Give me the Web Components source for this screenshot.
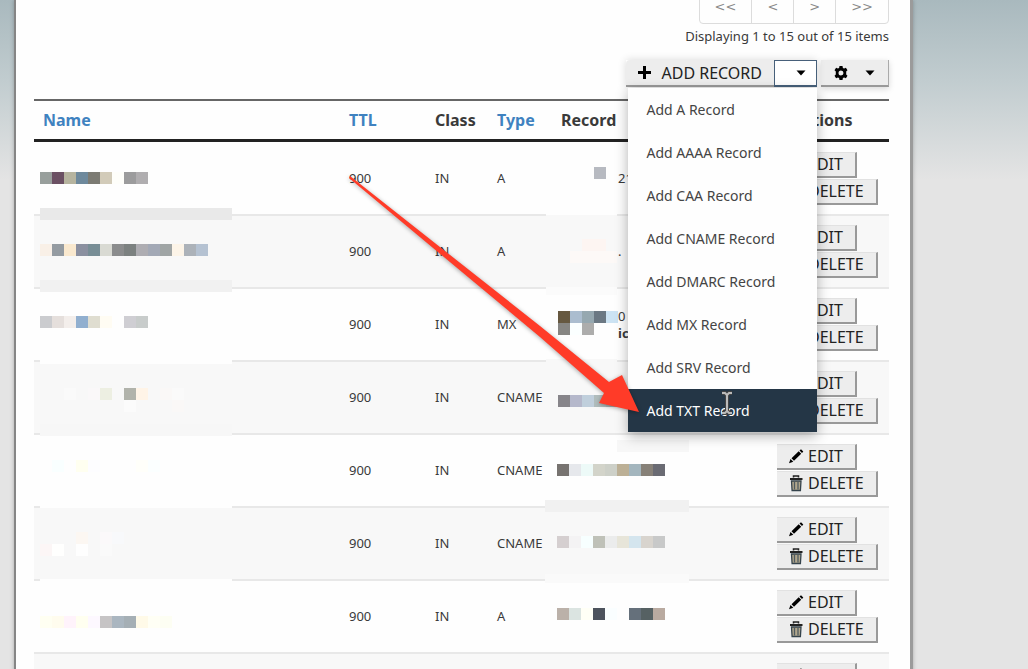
<!DOCTYPE html>
<html lang="en">
<head>
<meta charset="utf-8">
<meta name="viewport" content="width=device-width, initial-scale=1">
<title>DNS Records</title>
<style>
  html, body {
    margin: 0;
    height: 100%;
    overflow: hidden;
  }

  body {
    position: relative;
    font-family: "Noto Sans", sans-serif;
    color: #3a3a3a;
    background: #e4e4e4 linear-gradient(#a9b9be, #c1cccf 80px, #e4e4e4 180px) no-repeat;
  }
</style>
</head>
<body>
<dns-panel>
  <item-pager></item-pager>
  <record-toolbar></record-toolbar>
  <record-table></record-table>
</dns-panel>
<redaction-layer></redaction-layer>
<pointer-layer></pointer-layer>

<script>
// Small inline icons shared by the buttons
const icons = {
  plus: '<svg class="icon" width="13" height="13" viewBox="0 0 13 13"><path d="M5 0h3v5h5v3H8v5H5V8H0V5h5z"/></svg>',
  caret: '<svg class="caret" width="10" height="6" viewBox="0 0 10 6"><path d="M.5.5h9L5 5.500z"/></svg>',
  gear: '<svg class="icon" width="14" height="14" viewBox="0 0 14 14"><path fill-rule="evenodd" d="M5.500 0h3l.4 1.900 1.200.6 1.800-.8 1.600 2.500-1.300 1.400v2.800l1.300 1.400-1.600 2.500-1.800-.8-1.200.6-.4 1.900h-3l-.4-1.900-1.200-.6-1.800.8L.5 9.800l1.300-1.400V5.600L.5 4.200l1.600-2.500 1.800.8 1.200-.6zM7 4.500a2.500 2.500 0 1 0 0 5 2.500 2.500 0 0 0 0-5z"/></svg>',
  pencil: '<svg class="icon" width="16" height="15" viewBox="0 0 16 15"><path d="M11.500 1.500 13 .3l2.300 2.300-1.300 1.400zM3.500 9.300l7.200-7 2.500 2.500-7.200 7zM1 14.300l1.500-4.200 2.800 2.600z"/></svg>',
  trash: '<svg class="icon" width="16" height="17" viewBox="0 0 16 17"><path d="M5.500 2.500V1h5v1.500" fill="none" stroke="#222" stroke-width="1.500"/><path d="M2 3h12.500v2H2z" fill="#222"/><path d="M3.500 6h9.500l-.6 9.500H4.100z" fill="#b0a68c" stroke="#35434c" stroke-width="1.300"/><path d="M6.500 7v7.500M10 7v7.500" stroke="#4f5b60" stroke-width="1.300"/></svg>'
};

// Main white panel
class DnsPanel extends HTMLElement {
  constructor() {
    super();
    this.attachShadow({ mode: 'open' });
    this.shadowRoot.innerHTML = `
      <style>
        :host {
          display: flex;
          flex-direction: column;
          box-sizing: border-box;
          min-height: 100%;
          margin: 0 115px 0 14px;
          padding: 0 21px 0 18px;
          border-left: 2px solid #858585;
          border-right: 3px solid #9b9b9b;
          background: #fefefe;
          box-shadow: 0 0 4px rgba(0, 0, 0, 0.25);
        }
      </style>
      <slot></slot>
    `;
  }
}
customElements.define('dns-panel', DnsPanel);

// Page navigation with the item count below it
class ItemPager extends HTMLElement {
  constructor() {
    super();
    this.attachShadow({ mode: 'open' });
    this.shadowRoot.innerHTML = `
      <style>
        :host {
          display: flex;
          flex-direction: column;
          align-items: flex-end;
          margin-top: -11px;
        }
        nav {
          display: flex;
          border: 1px solid #dcdcdc;
          border-radius: 4px;
        }
        button {
          height: 33px;
          padding: 0 15px;
          border: 0;
          border-left: 1px solid #dcdcdc;
          background: none;
          font: 13px/33px "DejaVu Sans", sans-serif;
          color: #8a8a8a;
        }
        button:first-child {
          border-left: 0;
        }
        p {
          margin: 4px 0 0;
          font-size: 13px;
          line-height: 16px;
        }
      </style>
      <nav aria-label="Pages">
        <button type="button">&lt;&lt;</button>
        <button type="button">&lt;</button>
        <button type="button">&gt;</button>
        <button type="button">&gt;&gt;</button>
      </nav>
      <p>Displaying 1 to 15 out of 15 items</p>
    `;
  }
}
customElements.define('item-pager', ItemPager);

// Split button with its open menu, and the settings button
class RecordToolbar extends HTMLElement {
  constructor() {
    super();
    this.attachShadow({ mode: 'open' });
    const types = ['A', 'AAAA', 'CAA', 'CNAME', 'DMARC', 'MX', 'SRV', 'TXT'];
    const items = types.map(type => `
      <li><button type="button" class="${type === 'TXT' ? 'item active' : 'item'}">Add ${type} Record</button></li>
    `).join('');

    this.shadowRoot.innerHTML = `
      <style>
        :host {
          display: flex;
          justify-content: flex-end;
          gap: 4px;
          margin-top: 16px;
        }
        .split {
          position: relative;
          display: flex;
          box-shadow: 0 0 8px rgba(0, 0, 0, 0.15);
        }
        .tool {
          display: flex;
          align-items: center;
          box-sizing: border-box;
          height: 27px;
          border: 0;
          border-right: 1px solid #aaa;
          border-bottom: 2px solid #999;
          background: #ededed;
          font: 16px/24px "Noto Sans", sans-serif;
          color: #222;
        }
        .add {
          gap: 10px;
          padding: 0 12px;
          border-right: 0;
          border-radius: 4px 0 0 0;
        }
        .toggle {
          justify-content: flex-end;
          width: 43px;
          padding: 0 10px;
          border: 1px solid #47607a;
          border-bottom-width: 2px;
          background: #fff;
        }
        .settings {
          gap: 17px;
          padding: 0 13px;
          box-shadow: 0 2px 6px rgba(0, 0, 0, 0.15);
        }
        ul {
          position: absolute;
          top: 28px;
          right: 0;
          left: 2px;
          z-index: 2;
          margin: 0;
          padding: 0;
          list-style: none;
          background: #fefefe;
          box-shadow: 0 4px 12px rgba(0, 0, 0, 0.3);
        }
        .item {
          display: block;
          width: 100%;
          height: 43px;
          padding: 0 18px;
          border: 0;
          background: none;
          font: 14px/43px "Noto Sans", sans-serif;
          color: #444;
          text-align: left;
        }
        .active {
          background: #243646;
          color: #fff;
        }
      </style>
      <div class="split">
        <button type="button" class="tool add">${icons.plus}ADD RECORD</button>
        <button type="button" class="tool toggle" aria-label="Record types">${icons.caret}</button>
        <ul>${items}</ul>
      </div>
      <button type="button" class="tool settings" aria-label="Settings">${icons.gear}${icons.caret}</button>
    `;
  }
}
customElements.define('record-toolbar', RecordToolbar);

// Edit and delete buttons of one record
class RecordActions extends HTMLElement {
  constructor() {
    super();
    this.attachShadow({ mode: 'open' });
    this.shadowRoot.innerHTML = `
      <style>
        :host {
          display: flex;
          flex-direction: column;
          align-items: flex-start;
          gap: 1px;
        }
        button {
          display: flex;
          align-items: center;
          gap: 4px;
          box-sizing: border-box;
          height: 26px;
          padding: 0 12px 0 11px;
          border: 0;
          border-top: 1px solid #e2e2e2;
          border-right: 2px solid #999;
          border-bottom: 2px solid #999;
          background: #ededed;
          font: 16px/23px "Noto Sans", sans-serif;
          color: #222;
        }
      </style>
      <button type="button">${icons.pencil}EDIT</button>
      <button type="button">${icons.trash}DELETE</button>
    `;
  }
}
customElements.define('record-actions', RecordActions);

class RecordTable extends HTMLElement {
  constructor() {
    super();
    this.attachShadow({ mode: 'open' });
    const rows = [
      ['A', '21'],
      ['A', '.'],
      ['MX', '0<br><b>ic</b>'],
      ['CNAME', ''],
      ['CNAME', ''],
      ['CNAME', ''],
      ['A', ''],
      ['A', '']
    ];
    const body = rows.map(([type, record]) => `
      <tr>
        <td></td>
        <td>900</td>
        <td>IN</td>
        <td>${type}</td>
        <td class="record">${record}</td>
        <td><record-actions></record-actions></td>
      </tr>
    `).join('');

    this.shadowRoot.innerHTML = `
      <style>
        :host {
          display: block;
          margin-top: 12px;
        }
        table {
          width: 100%;
          table-layout: fixed;
          border-spacing: 0;
        }
        th, td {
          box-sizing: border-box;
          padding: 0 0 0 9px;
          text-align: left;
          white-space: nowrap;
        }
        th {
          height: 43px;
          border-top: 2px solid #666;
          border-bottom: 3px solid #222;
          font-size: 16px;
          line-height: 20px;
        }
        th:last-child {
          padding-left: 25px;
        }
        a {
          color: #3f82c0;
          text-decoration: none;
        }
        td {
          height: 73px;
          border-top: 2px solid #e8e8e8;
          font-size: 13px;
          line-height: 17px;
        }
        tbody tr:first-child td {
          height: 72px;
          border-top: 0;
        }
        tbody tr:nth-child(even) {
          background: #f8f8f8;
        }
        .record {
          padding-left: 66px;
        }
        .name { width: auto; }
        .ttl { width: 86px; }
        .class { width: 62px; }
        .type { width: 64px; }
        .value { width: 216px; }
        .actions { width: 121px; }
      </style>
      <table>
        <colgroup>
          <col class="name"><col class="ttl"><col class="class">
          <col class="type"><col class="value"><col class="actions">
        </colgroup>
        <thead>
          <tr>
            <th><a href="#name">Name</a></th>
            <th><a href="#ttl">TTL</a></th>
            <th>Class</th>
            <th><a href="#type">Type</a></th>
            <th>Record</th>
            <th>Actions</th>
          </tr>
        </thead>
        <tbody>${body}</tbody>
      </table>
    `;
  }
}
customElements.define('record-table', RecordTable);

// Pixel blocks that hide the private names and values
class RedactionLayer extends HTMLElement {
  constructor() {
    super();
    this.attachShadow({ mode: 'open' });

    // x, y, width, height, colour
    const bands = [
      [40, 208, 192, 12, '#e9e9e9'],
      [40, 280, 192, 12, '#f1f1f1'],
      [40, 352, 192, 12, '#fefefe'],
      [40, 424, 192, 12, '#f7f7f7'],
      [40, 496, 192, 12, '#fefefe'],
      [40, 579, 192, 3, '#fefefe'],
      [546, 204, 71, 11, '#fefefe'],
      [546, 215, 71, 8, '#f8f8f8'],
      [546, 287, 71, 8, '#fbfbfb'],
      [546, 359, 71, 6, '#f8f8f8'],
      [617, 440, 72, 12, '#f7f7f7'],
      [545, 500, 144, 12, '#f1f1f1'],
      [545, 574, 144, 9, '#fafafa'],
      [594, 167, 12, 12, '#b7bac1'],
      [582, 239, 24, 12, '#fdf5f2'],
      [570, 251, 47, 12, '#fdf9f7']
    ];
    // x, y, colour of each 12px block ("-" leaves one out)
    const runs = [
      [40, 172, '#989f9c #6b5063 #b6b49f #6e899c #7c7b73 #d2cbb9 #fefefa #9c9c9d #b0aeb0'],
      [40, 244, '#f9f0e7 #949ba1 #fae9cf #8b90a0 #788e96 #d9dad3 #8b8c8d #7c8180 #aeadb2 #a3a9b6 #a0a5a5 #fcf4e8 #acb2b9 #b5c2d2'],
      [40, 316, '#cbcccf #e5dfdc #f3eeeb #91afcf #dfddd0 #fffcf3 - #cfced3 #c8cccb'],
      [40, 388, '- - #fafafa - #faf8f9 #edefe2 - #b1b3ab #fff4e7 - #faf8f7 #fafafa'],
      [112, 400, '- #fbfbfb - - - #faf8f7'],
      [40, 460, '- #f9ffff - #fffff0 #fdfdff - - - #fffffa #fbffff'],
      [40, 532, '- - - #fcf7f2 - #fbf9fa #f8f9fb'],
      [40, 544, '#fcf6f6 #fffffe - #fefefe - #fafafa'],
      [40, 616, '#fffff2 #fffcee #fff3fb #fffff0 #fdf8ff #c6c4c5 #aab6c0 #a5afb5 #fffae8 #fffff5 #fdfef3'],
      [558, 311, '#665840 #abbdcf #96a8b0 #6b7883 #cce3f3'],
      [558, 323, '#878683 #fbffff #adadac'],
      [558, 395, '#87858a #b5b8cb #c0cfdc #b0bcbc #aab4b5'],
      [557, 464, '#777370 #e6e8ec #edfaf8 #d3d4ca #cdd0c8 #bcb096 #a4b6be #878178 #6a6b73'],
      [557, 536, '#d5cfd0 #f4f3f4 #f7ffff #bfc1b8 #ebecec #e7e5d9 #d4e5ee #d8d4ce #c8c9c9'],
      [557, 608, '#bbb1a9 #dbe4e1 #fffff6 #4d535d #fafeff - #65707b #566163 #b9aaa0']
    ];

    const bandRects = bands.map(([x, y, w, h, fill]) =>
      `<rect x="${x}" y="${y}" width="${w}" height="${h}" fill="${fill}"/>`);
    const blockRects = runs.flatMap(([x, y, fills]) =>
      fills.split(' ').map((fill, i) => fill === '-' ? '' :
        `<rect x="${x + i * 12}" y="${y}" width="12" height="12" fill="${fill}"/>`));

    this.shadowRoot.innerHTML = `
      <style>
        :host {
          position: absolute;
          inset: 0;
          z-index: 1;
          pointer-events: none;
        }
      </style>
      <svg width="100%" height="100%" shape-rendering="crispEdges" aria-hidden="true">
        ${bandRects.join('')}${blockRects.join('')}
      </svg>
    `;
  }
}
customElements.define('redaction-layer', RedactionLayer);

// Red arrow to the TXT item, and the text cursor
class PointerLayer extends HTMLElement {
  constructor() {
    super();
    this.attachShadow({ mode: 'open' });
    this.shadowRoot.innerHTML = `
      <style>
        :host {
          position: absolute;
          inset: 0;
          z-index: 3;
          pointer-events: none;
        }
        .arrow {
          fill: #ff3b28;
          filter: drop-shadow(0 1px 2px rgba(0, 0, 0, 0.35));
        }
      </style>
      <svg width="100%" height="100%" aria-hidden="true">
        <path class="arrow" d="M350 176 540 326 609 382 622 375 639 412 599 403 604 393 540 337 349 178z"/>
        <g fill="none">
          <path d="M722 393h3l2 2 2-2h3M727 395v16M722 413h3l2-2 2 2h3" stroke="#444" stroke-width="4"/>
          <path d="M722 393h3l2 2 2-2h3M727 395v16M722 413h3l2-2 2 2h3" stroke="#bbb" stroke-width="2"/>
        </g>
      </svg>
    `;
  }
}
customElements.define('pointer-layer', PointerLayer);
</script>
</body>
</html>
